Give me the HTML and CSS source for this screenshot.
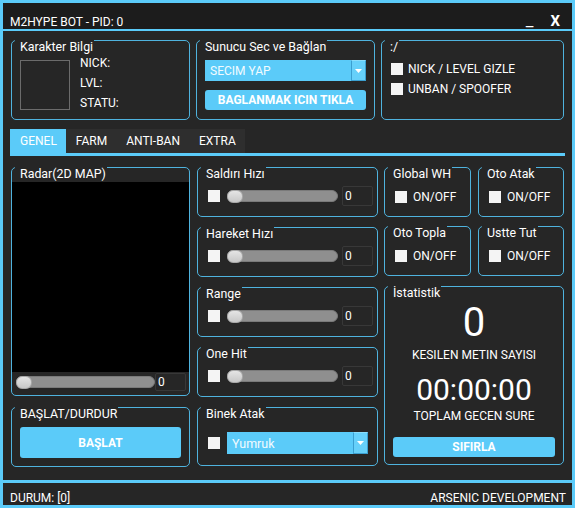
FILE: index.html
```html
<!DOCTYPE html>
<html lang="tr">
<head>
  <meta charset="UTF-8" />
  <title>M2HYPE BOT</title>
  <link rel="stylesheet" href="styles.css">
</head>
<body>
  <div class="window">
    <header class="titlebar">
      <span class="title">M2HYPE BOT - PID: 0</span>
      <span class="controls">
        <span class="min">_</span>
        <span class="close">X</span>
      </span>
    </header>

    <main class="panel">
      <div class="top-row">
        <section class="group group-char">
          <div class="group-title">Karakter Bilgi</div>
          <div class="char-body">
            <div class="avatar"></div>
            <div class="char-info">
              <div>NICK:</div>
              <div>LVL:</div>
              <div>STATU:</div>
            </div>
          </div>
        </section>

        <section class="group group-server">
          <div class="group-title">Sunucu Sec ve Bağlan</div>
          <div class="combo combo-server">
            <span>SECIM YAP</span>
            <span class="combo-btn">
              <svg width="7" height="4" viewBox="0 0 7 4"><path d="M0 0H7L3.5 4Z" fill="#fff"/></svg>
            </span>
          </div>
          <button class="btn btn-connect">BAGLANMAK ICIN TIKLA</button>
        </section>

        <section class="group group-misc">
          <div class="group-title">:/</div>
          <div class="check-row first"><span class="box"></span>NICK / LEVEL GIZLE</div>
          <div class="check-row"><span class="box"></span>UNBAN / SPOOFER</div>
        </section>
      </div>

      <nav class="tabs">
        <span class="tab active">GENEL</span>
        <span class="tab">FARM</span>
        <span class="tab">ANTI-BAN</span>
        <span class="tab">EXTRA</span>
      </nav>

      <div class="main">
        <div class="col col-left">
          <section class="group radar-group">
            <div class="group-title">Radar(2D MAP)</div>
            <div class="radar-map"></div>
            <div class="radar-slider">
              <div class="track track-wide"><span class="thumb"></span></div>
              <div class="num num-small">0</div>
            </div>
          </section>
          <section class="group start-group">
            <div class="group-title">BAŞLAT/DURDUR</div>
            <button class="btn btn-start">BAŞLAT</button>
          </section>
        </div>

        <div class="col col-mid">
          <section class="group slider-group">
            <div class="group-title">Saldırı Hızı</div>
            <div class="slider-row">
              <span class="box"></span>
              <div class="track"><span class="thumb"></span></div>
              <div class="num">0</div>
            </div>
          </section>
          <section class="group slider-group">
            <div class="group-title">Hareket Hızı</div>
            <div class="slider-row">
              <span class="box"></span>
              <div class="track"><span class="thumb"></span></div>
              <div class="num">0</div>
            </div>
          </section>
          <section class="group slider-group">
            <div class="group-title">Range</div>
            <div class="slider-row">
              <span class="box"></span>
              <div class="track"><span class="thumb"></span></div>
              <div class="num">0</div>
            </div>
          </section>
          <section class="group slider-group">
            <div class="group-title">One Hit</div>
            <div class="slider-row">
              <span class="box"></span>
              <div class="track"><span class="thumb"></span></div>
              <div class="num">0</div>
            </div>
          </section>
          <section class="group binek-group">
            <div class="group-title">Binek Atak</div>
            <div class="binek-row">
              <span class="box"></span>
              <div class="combo combo-binek">
                <span>Yumruk</span>
                <span class="combo-btn">
                  <svg width="7" height="4" viewBox="0 0 7 4"><path d="M0 0H7L3.5 4Z" fill="#fff"/></svg>
                </span>
              </div>
            </div>
          </section>
        </div>

        <div class="col col-right">
          <div class="pair">
            <section class="group toggle-group">
              <div class="group-title">Global WH</div>
              <div class="toggle-row"><span class="box"></span>ON/OFF</div>
            </section>
            <section class="group toggle-group narrow">
              <div class="group-title">Oto Atak</div>
              <div class="toggle-row"><span class="box"></span>ON/OFF</div>
            </section>
          </div>
          <div class="pair">
            <section class="group toggle-group">
              <div class="group-title">Oto Topla</div>
              <div class="toggle-row"><span class="box"></span>ON/OFF</div>
            </section>
            <section class="group toggle-group narrow">
              <div class="group-title">Ustte Tut</div>
              <div class="toggle-row"><span class="box"></span>ON/OFF</div>
            </section>
          </div>
          <section class="group stats-group">
            <div class="group-title">İstatistik</div>
            <div class="stat-count">0</div>
            <div class="stat-label first">KESILEN METIN SAYISI</div>
            <div class="stat-time">00:00:00</div>
            <div class="stat-label">TOPLAM GECEN SURE</div>
            <button class="btn btn-reset">SIFIRLA</button>
          </section>
        </div>
      </div>
    </main>

    <footer class="statusbar">
      <span>DURUM: [0]</span>
      <span>ARSENIC DEVELOPMENT</span>
    </footer>
  </div>
</body>
</html>
```

FILE: styles.css
```css
body {
  margin: 0;
  background: #262626;
  font-family: Roboto, "Liberation Sans", sans-serif;
  font-size: 12px;
  color: #fff;
}
.window {
  width: 575px;
  height: 508px;
  box-sizing: border-box;
  border: 3px solid #5bcbf9;
  display: flex;
  flex-direction: column;
  background: #262626;
}
.titlebar {
  flex: none;
  height: 28px;
  box-sizing: border-box;
  background: #1c1c1c;
  border-bottom: 2px solid #5bcbf9;
  padding: 10px 12px 0 7px;
  display: flex;
  justify-content: space-between;
  align-items: baseline;
  line-height: 14px;
}
.controls {
  display: flex;
  align-items: baseline;
  gap: 17px;
}
.min {
  font-size: 17px;
}
.close {
  font-size: 15px;
  font-weight: bold;
}
.panel {
  flex: 1;
  box-sizing: border-box;
  padding: 9px 8px 0;
}
.top-row {
  display: flex;
  gap: 6px;
  height: 80px;
}
.group {
  box-sizing: border-box;
  border: 1px solid #4fb3de;
  border-radius: 5px;
  padding: 0 8px;
}
.group-title {
  width: max-content;
  margin: -1px 0 0 -5px;
  padding: 0 1px 0 5px;
  line-height: 14px;
  font-size: 12.4px;
  background: #262626;
}
.group-char,
.group-server {
  width: 179px;
}
.group-misc {
  width: 183px;
}
.char-body {
  display: flex;
  gap: 10px;
}
.avatar {
  width: 50px;
  height: 50px;
  box-sizing: border-box;
  border: 1px solid #6b6b6b;
  margin-top: 6px;
}
.char-info {
  line-height: 20px;
  margin-top: -1px;
}
.combo {
  box-sizing: border-box;
  display: flex;
  justify-content: space-between;
  align-items: center;
  background: #5bcbf9;
  color: #f2fbff;
  padding-left: 5px;
}
.combo-server {
  margin-top: 6px;
  height: 21px;
}
.combo-btn {
  width: 15px;
  height: 100%;
  box-sizing: border-box;
  border: 1px solid #3b9fd0;
  border-top-color: #8adcfb;
  background: #66d0fa;
  display: flex;
  align-items: center;
  justify-content: center;
}
.btn {
  display: block;
  width: 100%;
  border: none;
  border-radius: 3px;
  background: #5bcbf9;
  color: #fff;
  font-family: Roboto, "Liberation Sans", sans-serif;
  font-size: 12px;
  font-weight: bold;
  padding: 0;
}
.btn-connect {
  margin-top: 9px;
  height: 20px;
}
.check-row {
  display: flex;
  align-items: center;
  gap: 5px;
  height: 20px;
  padding-left: 1px;
}
.check-row.first {
  margin-top: 5px;
}
.box {
  flex: none;
  width: 12px;
  height: 12px;
  background: #f4f4f4;
}
.tabs {
  display: flex;
  margin: 9px -1px 0;
  border-bottom: 3px solid #5bcbf9;
}
.tab {
  line-height: 24px;
  padding: 0 9px 0 10px;
  background: #2e2e2e;
}
.tab.active {
  background: #5bcbf9;
}
.main {
  display: flex;
  gap: 6px;
  margin-top: 11px;
}
.col {
  display: flex;
  flex-direction: column;
}
.col-left {
  width: 179px;
  gap: 11px;
}
.col-mid {
  width: 181px;
  margin-left: 1px;
  gap: 10px;
}
.col-right {
  width: 180px;
  gap: 9px;
}
.radar-group {
  height: 229px;
}
.radar-map {
  height: 190px;
  margin: 1px -8px 0;
  background: #000;
}
.radar-slider {
  display: flex;
  align-items: center;
  margin: 1px -5px 0 -4px;
}
.track {
  flex: none;
  box-sizing: border-box;
  width: 111px;
  height: 12px;
  border-radius: 6px;
  background: #8f8f8f;
  border: 1px solid #7a7a7a;
  display: flex;
  align-items: center;
}
.track-wide {
  width: 139px;
}
.thumb {
  width: 16px;
  height: 13px;
  margin-left: -1px;
  box-sizing: border-box;
  border-radius: 6px;
  border: 1px solid #a8a8a8;
  background: linear-gradient(#e4e4e4, #c8c8c8);
}
.num {
  flex: none;
  box-sizing: border-box;
  width: 31px;
  height: 20px;
  margin-left: 4px;
  border: 1px solid #383838;
  border-radius: 2px;
  padding-left: 2px;
  line-height: 18px;
}
.num-small {
  height: 18px;
  margin-left: 0;
  line-height: 16px;
}
.start-group {
  height: 60px;
}
.btn-start {
  margin-top: 6px;
  height: 31px;
}
.slider-group {
  height: 50px;
}
.slider-row {
  display: flex;
  align-items: center;
  height: 20px;
  margin: 5px -4px 0 0;
}
.slider-row .box {
  margin-left: 2px;
}
.slider-row .track {
  margin-left: 7px;
}
.binek-group {
  height: 59px;
}
.binek-row {
  display: flex;
  align-items: center;
  height: 22px;
  margin-top: 11px;
}
.binek-row .box {
  margin-left: 2px;
}
.combo-binek {
  width: 141px;
  height: 22px;
  margin-left: 7px;
  font-size: 12.5px;
}
.pair {
  display: flex;
  gap: 7px;
}
.toggle-group {
  width: 87px;
  height: 50px;
}
.toggle-group.narrow {
  width: 86px;
}
.toggle-row {
  display: flex;
  align-items: center;
  gap: 6px;
  height: 20px;
  margin-top: 6px;
  padding-left: 2px;
}
.stats-group {
  height: 179px;
  margin-top: 1px;
  text-align: center;
}
.stats-group .group-title {
  text-align: left;
}
.stat-count {
  margin-top: 3px;
  font-size: 40px;
  line-height: 40px;
}
.stat-label {
  font-size: 12px;
  line-height: 14px;
  margin-top: 4px;
}
.stat-label.first {
  margin-top: 5px;
}
.stat-time {
  margin-top: 13px;
  font-size: 30px;
  line-height: 30px;
}
.btn-reset {
  margin-top: 14px;
  height: 20px;
}
.statusbar {
  flex: none;
  height: 25px;
  box-sizing: border-box;
  border-top: 3px solid #5bcbf9;
  padding: 8px 6px 0 7px;
  display: flex;
  justify-content: space-between;
  line-height: 14px;
}
```
